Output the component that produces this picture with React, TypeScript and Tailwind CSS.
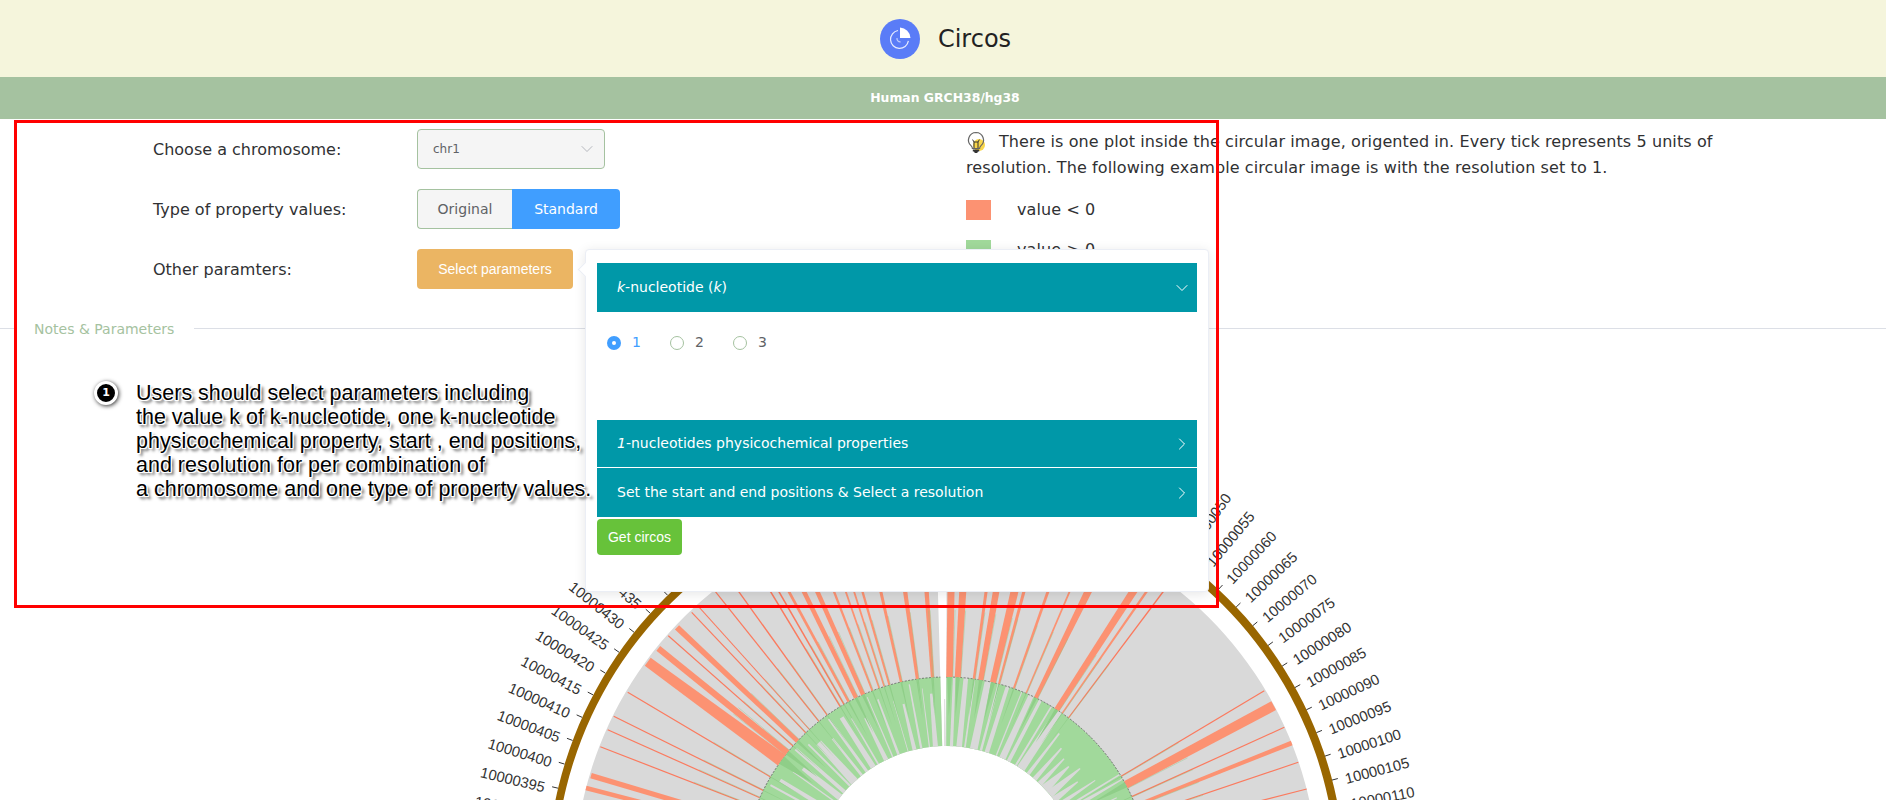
import React from "react";
import { ChevronDown, ChevronRight } from "lucide-react";

const CX = 945;
const CY = 882;
const rad = (d: number) => (d * Math.PI) / 180;
const polar = (r: number, d: number): [number, number] => [CX + r * Math.sin(rad(d)), CY - r * Math.cos(rad(d))];
const pt = (p: [number, number]) => `${p[0].toFixed(2)} ${p[1].toFixed(2)}`;

function sector(r1: number, r2: number, a1: number, a2: number) {
  const large = a2 - a1 > 180 ? 1 : 0;
  return `M${pt(polar(r2, a1))}A${r2} ${r2} 0 ${large} 1 ${pt(polar(r2, a2))}L${pt(polar(r1, a2))}A${r1} ${r1} 0 ${large} 0 ${pt(polar(r1, a1))}Z`;
}

// outer end of each orange bar, read off the picture: [x, y, outer width, width at the inner circle, runs on behind the popover]
type Bar = [number, number, number, number, boolean?];
const bars: Bar[] = [
  [646.7, 662.7, 10, 13],
  [657.3, 649.3, 6, 6.5],
  [676, 628.3, 6, 4.5],
  [690.7, 613.3, 1.2, 1.2],
  [667.3, 636.7, 1.2, 1.2],
  [626.7, 693.3, 1.2, 1.2],
  [612.7, 717.3, 1.2, 1.2],
  [606.7, 730.7, 1.2, 1.2],
  [599.3, 747.7, 1.2, 1.2],
  [590, 776.7, 5.5, 4.5],
  [585, 789, 4.5, 4],
  [696.7, 606.7, 1, 1],
  [715, 593.3, 1.2, 1.2, true],
  [738.3, 593.3, 1.4, 1.2, true],
  [770, 593.3, 1.6, 1.4, true],
  [778.3, 593.3, 1.6, 1.4, true],
  [788.3, 593.3, 2.8, 2.6, true],
  [803.3, 593.3, 4.6, 4.4, true],
  [816.7, 593.3, 4.6, 4.4, true],
  [833.3, 593.3, 2.6, 2, true],
  [845, 593.3, 2, 1.6, true],
  [853.3, 593.3, 2, 1.6, true],
  [861.7, 593.3, 2.6, 2, true],
  [880, 593.3, 3.4, 2.6, true],
  [903.3, 593.3, 2.6, 2, true],
  [926.7, 593.3, 2.6, 2, true],
  [905, 593.3, 3.4, 2, true],
  [925, 593.3, 4, 2, true],
  [950, 593.3, 7.4, 6.6, true],
  [961.7, 593.3, 8, 6, true],
  [985, 593.3, 3.4, 2.6, true],
  [995, 593.3, 7.4, 5.4, true],
  [1013.3, 593.3, 9.4, 6, true],
  [1022.7, 593.3, 4, 2, true],
  [1046.7, 593.3, 3.4, 2, true],
  [1068.3, 593.3, 2, 1.4, true],
  [1086.7, 593.3, 8.6, 4, true],
  [1131.7, 593.3, 8, 5.4, true],
  [1145, 593.3, 2.6, 1.4, true],
  [1161.7, 593.3, 1.4, 1, true],
  [1263.3, 691.7, 1.2, 1.2],
  [1272.7, 706.7, 10, 8],
  [1283.3, 728.3, 1.2, 1.2],
  [1290.7, 744, 4.6, 3],
  [1297.3, 763.3, 1.2, 1.2],
  [1305.7, 790, 1.2, 1.2],
];

// grey wedges cut from the green band: [angle, width at the band's top (deg), width at the hole (deg), how far they reach]
const wedges: [number, number, number, number][] = [];
const seq = [0.9, 1.6, 0.5, 2.2, 0.7, 1.3, 0.4, 1.9, 1.1, 0.6, 2.4, 0.8];
for (let i = 0, a = -74; a < 34; i++) {
  const w = seq[i % seq.length];
  wedges.push([a, a > -30 && a < 0 ? w * 0.35 : w * 0.8, a > -30 && a < 0 ? w * 0.9 : w * 1.5, a > 2 ? 204 : 200 - (i % 4) * 6]);
  a += 2.1 + seq[(i + 5) % seq.length] * 0.9;
}
wedges.push([37.5, 0.5, 1.5, 186], [41, 0.5, 2, 176], [44, 0.4, 2.4, 170], [47, 0.5, 4, 168], [50, 0.5, 3.5, 175], [53, 0.4, 3, 165], [56, 0.3, 2, 180], [58.5, 0.4, 1, 204], [60, 0.4, 2, 204], [64, 0.3, 1.5, 190]);

function CircosChart() {
  return (
    <svg width={1000} height={361} viewBox="443 440 1000 361" className="shrink-0 block">
      <path d={sector(135, 372, 0.1, 358.4)} fill="#d9d9d9" />
      <path d={sector(135, 204, 0.1, 358.4)} fill="#a1d99b" />
      {wedges.map(([a, top, hole, reach], i) => {
        const p = [polar(reach, a - top / 2), polar(reach, a + top / 2), polar(135, a + hole / 2), polar(135, a - hole / 2)];
        return <polygon key={i} points={p.map(pt).join(" ")} fill="#d9d9d9" />;
      })}
      <path d={sector(204, 204.01, 0.1, 358.4)} fill="none" stroke="#555" strokeWidth={0.6} strokeDasharray="2 1.5" strokeOpacity={0.7} />
      {bars.map(([x, y, w1, w2, hidden], i) => {
        const dx = x - CX;
        const dy = CY - y;
        const a = (Math.atan2(dx, dy) * 180) / Math.PI;
        const r = hidden ? 372 : Math.hypot(dx, dy);
        const d1 = (((w1 / 2) / r) * 180) / Math.PI;
        const d2 = (((w2 / 2) / 204) * 180) / Math.PI;
        const p = [polar(r, a - d1), polar(r, a + d1), polar(204, a + d2), polar(204, a - d2)];
        const edge = [polar(204 + (r - 204) * 0.4, a + d2), polar(204, a + d2)];
        const inner = [polar(204, a - d2 * 0.7), polar(204, a + d2 * 0.7), polar(165, a)];
        return (
          <g key={i}>
            <polygon points={p.map(pt).join(" ")} fill={w1 < 2 ? "#fb7a5e" : "#fc9272"} />
            <line x1={edge[0][0]} y1={edge[0][1]} x2={edge[1][0]} y2={edge[1][1]} stroke="#86c57f" strokeWidth={0.5} strokeOpacity={0.7} />
            <polygon points={inner.map(pt).join(" ")} fill="#8fce88" />
          </g>
        );
      })}
      <path d={sector(391, 399, 0.1, 358.4)} fill="#996600" />
      {Array.from({ length: 100 }, (_, n) => {
        const a = n * 3.588;
        const [x1, y1] = polar(399, a);
        const [x2, y2] = polar(405, a);
        const [tx, ty] = polar(412, a);
        const right = a <= 180;
        return (
          <g key={n}>
            <line x1={x1} y1={y1} x2={x2} y2={y2} stroke="#333" strokeWidth={1} />
            <text
              x={tx}
              y={ty}
              dy="0.5em"
              textAnchor={right ? "start" : "end"}
              transform={`rotate(${right ? a - 90 : a + 90} ${tx} ${ty})`}
              fontSize={14.8}
              fontFamily="'Liberation Sans', sans-serif"
              fill="#333"
            >
              {10000000 + n * 5}
            </text>
          </g>
        );
      })}
    </svg>
  );
}

function PieBadge() {
  return (
    <svg width={40} height={40} viewBox="0 0 40 40" className="shrink-0">
      <circle cx={20} cy={20} r={20} fill="#5a7cf7" />
      <path d="M20 8.5a11 11 0 0 1 10.5 10.5H20Z" fill="#fff" />
      <path d="M18 11.5a9 9 0 1 0 10.4 10.4" fill="none" stroke="#fff" strokeOpacity={0.85} strokeWidth={1.2} />
      <path d="M17 19a3.2 3.2 0 0 0 3.6 3.8" fill="none" stroke="#fff" strokeOpacity={0.6} strokeWidth={1.2} />
    </svg>
  );
}

function Bulb() {
  return (
    <svg width={20} height={23} viewBox="0 0 20 23" className="inline-block align-[-7px] mr-[13px]">
      <circle cx={13} cy={14} r={6} fill="#f9d64a" />
      <path d="M10 1.5a7.6 7.6 0 0 0-4.8 13.4c.8.8 1.2 1.6 1.2 2.6h7.2c0-1 .4-1.8 1.2-2.6A7.6 7.6 0 0 0 10 1.5Z" fill="none" stroke="#666" strokeWidth={1.2} />
      <path d="M8 17V11L6.6 8.6M12 17V11l1.4-2.4M8 11h4" fill="none" stroke="#333" strokeWidth={1} />
      <path d="M6.8 18.5h6.4v2h-1.2l-.8 1.5H8.8L8 20.5H6.8Z" fill="#333" />
    </svg>
  );
}

function Radio({ label, active }: { label: string; active?: boolean }) {
  return (
    <div className="flex items-center w-[63px]">
      {active ? (
        <span className="w-3.5 h-3.5 rounded-full bg-[#409eff] flex items-center justify-center">
          <span className="w-1 h-1 rounded-full bg-white" />
        </span>
      ) : (
        <span className="w-3.5 h-3.5 rounded-full border border-[#a5c2a0] bg-white" />
      )}
      <span className={`ml-[11px] text-[14px] ${active ? "text-[#409eff]" : "text-[#606266]"}`}>{label}</span>
    </div>
  );
}

function PanelHead({ children, open, h }: { children: React.ReactNode; open?: boolean; h: string }) {
  return (
    <div className={`${h} bg-[#0098a8] text-white text-[14px] flex items-center justify-between pl-5 pr-[5px]`}>
      <span>{children}</span>
      {open ? <ChevronDown size={20} strokeWidth={1.2} /> : <ChevronRight size={20} strokeWidth={1.2} />}
    </div>
  );
}

function Popover() {
  return (
    <div className="absolute left-[168px] top-0 w-[624px] h-[343px] bg-white rounded shadow-[0_2px_12px_0_rgba(0,0,0,0.1)] border border-[#ebeef5] pl-[11px] pr-[11px] pt-[13px] z-10 font-['DejaVu_Sans',sans-serif]">
      <div className="absolute -left-[6px] top-[14px] w-[11px] h-[11px] rotate-45 bg-white border-l border-b border-[#ebeef5]" />
      <PanelHead open h="h-[49px]">
        <i>k</i>-nucleotide (<i>k</i>)
      </PanelHead>
      <div className="h-[108px] pl-[10px] pt-[20px] flex items-start">
        <Radio label="1" active />
        <Radio label="2" />
        <Radio label="3" />
      </div>
      <PanelHead h="h-[48px] border-b border-white">
        <i>1</i>-nucleotides physicochemical properties
      </PanelHead>
      <PanelHead h="h-[49px]">Set the start and end positions &amp; Select a resolution</PanelHead>
      <button className="mt-[2px] block w-[85px] h-9 rounded bg-[#67c23a] text-white text-[14px] font-['Liberation_Sans',sans-serif]">
        Get circos
      </button>
    </div>
  );
}

export default function App() {
  const halo =
    "[text-shadow:1px_0_0_#fff,-1px_0_0_#fff,0_1px_0_#fff,0_-1px_0_#fff,1px_1px_0_#fff,-1px_-1px_0_#fff,1px_-1px_0_#fff,-1px_1px_0_#fff,3px_3px_3px_rgba(0,0,0,0.65)]";
  return (
    <div className="relative w-[1886px] h-[801px] overflow-hidden bg-white font-['DejaVu_Sans',sans-serif] text-[16px] text-[#303133]">
      <header className="h-[77px] bg-[#f5f5dc] flex items-center justify-center gap-[18px] pl-[5px]">
        <PieBadge />
        <h1 className="text-[24px] text-[#222] font-normal">Circos</h1>
      </header>
      <div className="h-[42px] bg-[#a5c2a0] flex items-center justify-center pl-[4px] text-white text-[12.4px] font-bold">Human GRCH38/hg38</div>

      <div className="flex pt-[10px]">
        <div className="w-[966px] shrink-0 pl-[153px] flex flex-col gap-5">
          <div className="flex items-center h-10">
            <label className="w-[264px] pt-px">Choose a chromosome:</label>
            <div className="w-[188px] h-10 rounded border border-[#a5c2a0] bg-[#f5f5f5] flex items-center justify-between pl-[15px] pr-[7px] text-[12px] text-[#606266]">
              <span>chr1</span>
              <ChevronDown size={20} strokeWidth={1} className="text-[#a8abb2]" />
            </div>
          </div>
          <div className="flex items-center h-10">
            <label className="w-[264px] pt-px">Type of property values:</label>
            <div className="flex h-10 text-[14px]">
              <span className="w-[95px] rounded-l border border-[#a5c2a0] border-r-0 bg-[#f5f5f5] text-[#606266] flex items-center justify-center">Original</span>
              <span className="w-[108px] rounded-r bg-[#409eff] text-white flex items-center justify-center">Standard</span>
            </div>
          </div>
          <div className="flex items-center h-10">
            <label className="w-[264px] pt-px">Other paramters:</label>
            <div className="relative">
              <button className="block w-[156px] h-10 rounded bg-[#ebb563] text-white text-[14px] font-['Liberation_Sans',sans-serif]">Select parameters</button>
              <Popover />
            </div>
          </div>
        </div>
        <div className="w-[756px] shrink-0 tracking-[0.1px]">
          <p className="leading-[26px]">
            <Bulb />
            There is one plot inside the circular image, origented in. Every tick represents 5 units of resolution. The following example circular image is with the resolution set to 1.
          </p>
          <div className="mt-[19px] flex flex-col gap-5">
            <div className="flex items-center h-5">
              <span className="w-[25px] h-5 bg-[#fc9272]" />
              <span className="ml-[26px]">value &lt; 0</span>
            </div>
            <div className="flex items-center h-5">
              <span className="w-[25px] h-5 bg-[#a1d99b]" />
              <span className="ml-[26px]">value &gt; 0</span>
            </div>
          </div>
        </div>
      </div>

      <div className="flex items-center mt-[38px] h-[2px]">
        <div className="w-[14px] h-px bg-[#dcdfe6]" />
        <span className="px-5 pt-[2px] text-[14px] text-[#a5c2a0]">Notes &amp; Parameters</span>
        <div className="flex-1 h-px bg-[#dcdfe6]" />
      </div>

      <div className="flex justify-center mt-[110px] pl-[2px]">
        <CircosChart />
      </div>

      <div className="absolute left-[94px] top-[381px] w-6 h-6 rounded-full bg-black border-[3px] border-white shadow-[1px_1px_4px_rgba(0,0,0,0.8)] flex items-center justify-center text-white text-[11px] font-bold z-20">
        1
      </div>
      <div className={`absolute left-[136px] top-[381px] z-20 text-[21.5px] leading-[24px] text-black whitespace-nowrap font-['Liberation_Sans',sans-serif] ${halo}`}>
        Users should select parameters including
        <br />
        the value k of k-nucleotide, one k-nucleotide
        <br />
        physicochemical property, start , end positions,
        <br />
        and resolution for per combination of
        <br />a chromosome and one type of property values.
      </div>
      <div className="absolute left-[14px] top-[120px] w-[1205px] h-[488px] border-[3px] border-[#ff0000] z-30 pointer-events-none" />
    </div>
  );
}
